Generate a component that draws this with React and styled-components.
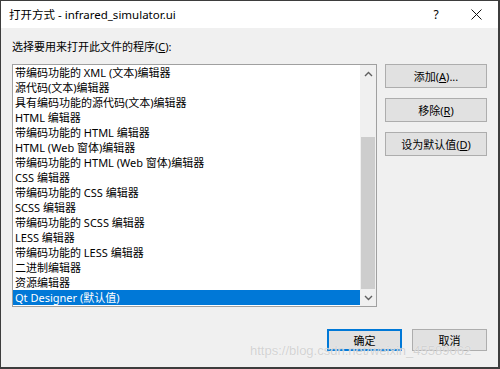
import React from 'react';
import styled, { createGlobalStyle } from 'styled-components';

const GlobalStyle = createGlobalStyle`
  html, body {
    margin: 0;
    padding: 0;
    background: #f0f0f0;
  }
  * {
    box-sizing: border-box;
  }
`;

const items = [
  '带编码功能的 XML (文本)编辑器',
  '源代码(文本)编辑器',
  '具有编码功能的源代码(文本)编辑器',
  'HTML 编辑器',
  '带编码功能的 HTML 编辑器',
  'HTML (Web 窗体)编辑器',
  '带编码功能的 HTML (Web 窗体)编辑器',
  'CSS 编辑器',
  '带编码功能的 CSS 编辑器',
  'SCSS 编辑器',
  '带编码功能的 SCSS 编辑器',
  'LESS 编辑器',
  '带编码功能的 LESS 编辑器',
  '二进制编辑器',
  '资源编辑器',
  'Qt Designer (默认值)',
];

const Chevron = ({ up }) => (
  <svg width="9" height="6" viewBox="0 0 9 6">
    <path
      d={up ? 'M1 5 L4.5 1.5 L8 5' : 'M1 1 L4.5 4.5 L8 1'}
      fill="none"
      stroke="#606060"
      strokeWidth="1.4"
    />
  </svg>
);

const App = () => (
  <>
    <GlobalStyle />
    <Dialog>
      <TitleBar>
        <Title>打开方式 - infrared_simulator.ui</Title>
        <TitleActions>
          <Help>?</Help>
          <Close>
            <svg width="11" height="11" viewBox="0 0 11 11">
              <path d="M0.5 0.5 L10.5 10.5 M10.5 0.5 L0.5 10.5" stroke="#111" strokeWidth="1" />
            </svg>
          </Close>
        </TitleActions>
      </TitleBar>

      <Body>
        <Label>
          选择要用来打开此文件的程序(<u>C</u>):
        </Label>

        <Main>
          <ListBox>
            <Items>
              {items.map((text, i) => (
                <Item key={text} selected={i === items.length - 1}>
                  {text}
                </Item>
              ))}
            </Items>
            <ScrollBar>
              <Arrow>
                <Chevron up />
              </Arrow>
              <Track>
                <Thumb />
              </Track>
              <Arrow>
                <Chevron />
              </Arrow>
            </ScrollBar>
          </ListBox>

          <SideButtons>
            <Button>
              添加(<u>A</u>)...
            </Button>
            <Button>
              移除(<u>R</u>)
            </Button>
            <Button>
              设为默认值(<u>D</u>)
            </Button>
          </SideButtons>
        </Main>

        <Footer>
          <FooterButton primary>确定</FooterButton>
          <FooterButton>取消</FooterButton>
          <Watermark>https://blog.csdn.net/weixin_45589062</Watermark>
        </Footer>
      </Body>
    </Dialog>
  </>
);

const Dialog = styled.div`
  width: 500px;
  height: 369px;
  display: flex;
  flex-direction: column;
  border-style: solid;
  border-color: #3d3d3d;
  border-width: 1px 2px 2px 1px;
  background: #f0f0f0;
  font-family: "Noto Sans", "Noto Sans CJK SC", sans-serif;
  font-size: 11px;
  color: #000;
  overflow: hidden;
`;

const TitleBar = styled.div`
  height: 27px;
  flex: none;
  display: flex;
  align-items: center;
  justify-content: space-between;
  background: #fff;
  padding-left: 8px;
`;

const Title = styled.div`
  font-size: 11.5px;
  line-height: 14px;
  color: #000;
`;

const TitleActions = styled.div`
  display: flex;
  align-items: center;
  height: 100%;
`;

const Help = styled.div`
  width: 40px;
  text-align: center;
  font-size: 12px;
  line-height: 14px;
  padding-right: 4px;
`;

const Close = styled.div`
  width: 40px;
  display: flex;
  align-items: center;
  justify-content: center;
  padding-right: 4px;
`;

const Body = styled.div`
  flex: 1;
  display: flex;
  flex-direction: column;
  padding: 11px 11px 0 11px;
`;

const Label = styled.div`
  height: 16px;
  line-height: 16px;
  margin-bottom: 9px;
`;

const Main = styled.div`
  display: flex;
  gap: 8px;
  height: 243px;
`;

const ListBox = styled.div`
  width: 365px;
  height: 100%;
  display: flex;
  background: #fff;
  border: 1px solid #a0a0a0;
`;

const Items = styled.div`
  flex: 1;
  display: flex;
  flex-direction: column;
  justify-content: flex-end;
  padding-bottom: 1px;
`;

const Item = styled.div`
  height: 15px;
  line-height: 15px;
  padding-left: 2px;
  white-space: nowrap;
  overflow: hidden;
  background: ${(p) => (p.selected ? '#0078d7' : 'transparent')};
  color: ${(p) => (p.selected ? '#fff' : '#000')};
`;

const ScrollBar = styled.div`
  width: 16px;
  display: flex;
  flex-direction: column;
  background: #f0f0f0;
`;

const Arrow = styled.div`
  height: 17px;
  flex: none;
  display: flex;
  align-items: center;
  justify-content: center;
`;

const Track = styled.div`
  flex: 1;
  display: flex;
  flex-direction: column;
  justify-content: flex-end;
  padding: 0 1px;
`;

const Thumb = styled.div`
  height: 152px;
  background: #cdcdcd;
`;

const SideButtons = styled.div`
  width: 102px;
  display: flex;
  flex-direction: column;
  gap: 10px;
`;

const Button = styled.div`
  height: 24px;
  display: flex;
  align-items: center;
  justify-content: center;
  background: #e1e1e1;
  border: 1px solid #adadad;
  white-space: nowrap;
`;

const Footer = styled.div`
  position: relative;
  display: flex;
  justify-content: flex-end;
  gap: 10px;
  margin-top: 22px;
`;

const FooterButton = styled.div`
  width: 75px;
  height: 22px;
  display: flex;
  align-items: center;
  justify-content: center;
  background: #e1e1e1;
  border: ${(p) => (p.primary ? '2px solid #0078d7' : '1px solid #adadad')};
`;

const Watermark = styled.div`
  position: absolute;
  left: 238px;
  top: 14px;
  font-family: "Liberation Sans", Arial, sans-serif;
  font-size: 13px;
  line-height: 15px;
  color: rgba(200, 200, 200, 0.8);
  text-shadow: 0 0 1px rgba(255, 255, 255, 0.9);
  white-space: nowrap;
  pointer-events: none;
`;

export default App;
